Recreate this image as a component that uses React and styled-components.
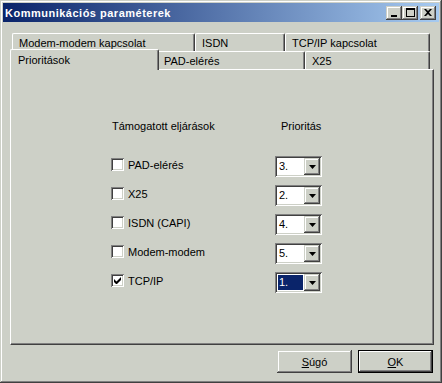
import React from 'react'
import styled, { createGlobalStyle } from 'styled-components'

const face = '#cdd0c7'
const shadow = '#808080'
const dark = '#404040'

const GlobalStyle = createGlobalStyle`
  html, body {
    margin: 0;
    padding: 0;
    background: ${face};
  }
  body {
    font-family: "Liberation Sans", Arial, sans-serif;
    font-size: 11px;
    color: #000;
  }
`

const raised = `
  box-shadow: inset -1px -1px ${dark}, inset 1px 1px ${face},
    inset -2px -2px ${shadow}, inset 2px 2px #fff;
`

const sunken = `
  box-shadow: inset 1px 1px ${shadow}, inset -1px -1px #fff,
    inset 2px 2px ${dark}, inset -2px -2px ${face};
`

const Window = styled.div`
  box-sizing: border-box;
  width: 442px;
  height: 383px;
  padding: 3px;
  background: ${face};
  ${raised}
`

const TitleBar = styled.div`
  height: 19px;
  display: flex;
  align-items: center;
  padding: 0 3px 0 2px;
  background: linear-gradient(to right, #0a246a, #a6caf0);
`

const Title = styled.div`
  flex: 1;
  color: #fff;
  font-weight: bold;
  font-size: 11px;
  letter-spacing: 0.5px;
`

const CaptionButton = styled.div`
  width: 16px;
  height: 14px;
  margin-left: ${p => p.$gap || 0}px;
  display: flex;
  align-items: center;
  justify-content: center;
  background: ${face};
  ${raised}
`

const Body = styled.div`
  padding: 11px 5px 0 7px;
`

const TabRow = styled.div`
  display: flex;
  align-items: flex-end;
  height: 18px;
  margin-left: 2px;
`

const Tab = styled.div`
  box-sizing: border-box;
  width: ${p => p.$w}px;
  height: ${p => (p.$active ? 21 : 18)}px;
  margin: ${p => (p.$active ? '0 -2px -1px -2px' : '0')};
  padding: ${p => (p.$active ? '3px 0 0 7px' : '2px 0 0 6px')};
  background: ${face};
  border-top: 1px solid #fff;
  border-left: 1px solid #fff;
  border-right: 1px solid ${dark};
  border-radius: 2px 2px 0 0;
  box-shadow: inset -1px 0 ${shadow};
  line-height: 14px;
  white-space: nowrap;
  position: relative;
  z-index: ${p => (p.$active ? 2 : 0)};
`

const Panel = styled.div`
  box-sizing: border-box;
  width: 424px;
  height: 276px;
  background: ${face};
  border-top: 1px solid #fff;
  border-left: 1px solid #fff;
  border-right: 1px solid ${dark};
  border-bottom: 1px solid ${dark};
  box-shadow: inset -1px -1px ${shadow};
  position: relative;
  z-index: 1;
`

const Grid = styled.div`
  display: grid;
  grid-template-columns: 164px 47px;
  grid-template-rows: 36px repeat(5, 29px);
  padding: 50px 0 0 100px;
`

const Header = styled.div`
  padding-left: ${p => p.$pad}px;
  line-height: 13px;
`

const Label = styled.div`
  display: flex;
  align-items: center;
  height: 17px;
  gap: 4px;
`

const CheckBox = styled.div`
  box-sizing: border-box;
  width: 13px;
  height: 13px;
  background: #fff;
  display: flex;
  align-items: center;
  justify-content: center;
  ${sunken}
`

const Combo = styled.div`
  box-sizing: border-box;
  width: 47px;
  height: 21px;
  padding: 2px;
  display: flex;
  background: #fff;
  ${sunken}
`

const ComboText = styled.div`
  flex: 1;
  margin: 1px;
  padding-left: 1px;
  line-height: 15px;
  background: ${p => (p.$sel ? '#0a246a' : 'transparent')};
  color: ${p => (p.$sel ? '#fff' : '#000')};
`

const DropButton = styled.div`
  width: 16px;
  height: 17px;
  display: flex;
  align-items: center;
  justify-content: center;
  background: ${face};
  ${raised}
`

const Footer = styled.div`
  display: flex;
  justify-content: flex-end;
  gap: 6px;
  padding: 5px 1px 0 0;
`

const Button = styled.div`
  box-sizing: border-box;
  width: 75px;
  height: 23px;
  display: flex;
  align-items: center;
  justify-content: center;
  background: ${face};
  ${p =>
    p.$default
      ? `box-shadow: inset 0 0 0 1px #000, inset -2px -2px ${dark}, inset 2px 2px #fff, inset -3px -3px ${shadow};`
      : raised}
  u {
    text-decoration: underline;
  }
`

const Arrow = () => (
  <svg width="7" height="4" viewBox="0 0 7 4">
    <path d="M0 0h7L3.5 4z" fill="#000" />
  </svg>
)

const Check = () => (
  <svg width="7" height="7" viewBox="0 0 7 7">
    <path d="M0 2v3l2 2h1l4-4V0L2.5 4.5z" fill="#000" />
  </svg>
)

const rows = [
  { name: 'PAD-elérés', prio: '3.' },
  { name: 'X25', prio: '2.' },
  { name: 'ISDN (CAPI)', prio: '4.' },
  { name: 'Modem-modem', prio: '5.' },
  { name: 'TCP/IP', prio: '1.', checked: true }
]

export default function App() {
  return (
    <>
      <GlobalStyle />
      <Window>
        <TitleBar>
          <Title>Kommunikációs paraméterek</Title>
          <CaptionButton>
            <svg width="8" height="9" viewBox="0 0 8 9">
              <rect x="1" y="7" width="6" height="2" fill="#000" />
            </svg>
          </CaptionButton>
          <CaptionButton>
            <svg width="9" height="9" viewBox="0 0 9 9">
              <path d="M0 0h9v9H0z M1 2v6h7V2z" fill="#000" fillRule="evenodd" />
            </svg>
          </CaptionButton>
          <CaptionButton $gap={2}>
            <svg width="8" height="7" viewBox="0 0 8 7">
              <path d="M0 0h2l2 2 2-2h2L5 3.5 8 7H6L4 5 2 7H0l3-3.5z" fill="#000" />
            </svg>
          </CaptionButton>
        </TitleBar>
        <Body>
          <TabRow>
            <Tab $w={183}>Modem-modem kapcsolat</Tab>
            <Tab $w={90}>ISDN</Tab>
            <Tab $w={145}>TCP/IP kapcsolat</Tab>
          </TabRow>
          <TabRow>
            <Tab $w={149} $active>Prioritások</Tab>
            <Tab $w={148}>PAD-elérés</Tab>
            <Tab $w={125}>X25</Tab>
          </TabRow>
          <Panel>
            <Grid>
              <Header $pad={1}>Támogatott eljárások</Header>
              <Header $pad={6}>Prioritás</Header>
              {rows.map(r => (
                <React.Fragment key={r.name}>
                  <Label>
                    <CheckBox>{r.checked && <Check />}</CheckBox>
                    {r.name}
                  </Label>
                  <Combo>
                    <ComboText $sel={r.checked}>{r.prio}</ComboText>
                    <DropButton>
                      <Arrow />
                    </DropButton>
                  </Combo>
                </React.Fragment>
              ))}
            </Grid>
          </Panel>
          <Footer>
            <Button>
              <span><u>S</u>úgó</span>
            </Button>
            <Button $default>
              <span><u>O</u>K</span>
            </Button>
          </Footer>
        </Body>
      </Window>
    </>
  )
}
